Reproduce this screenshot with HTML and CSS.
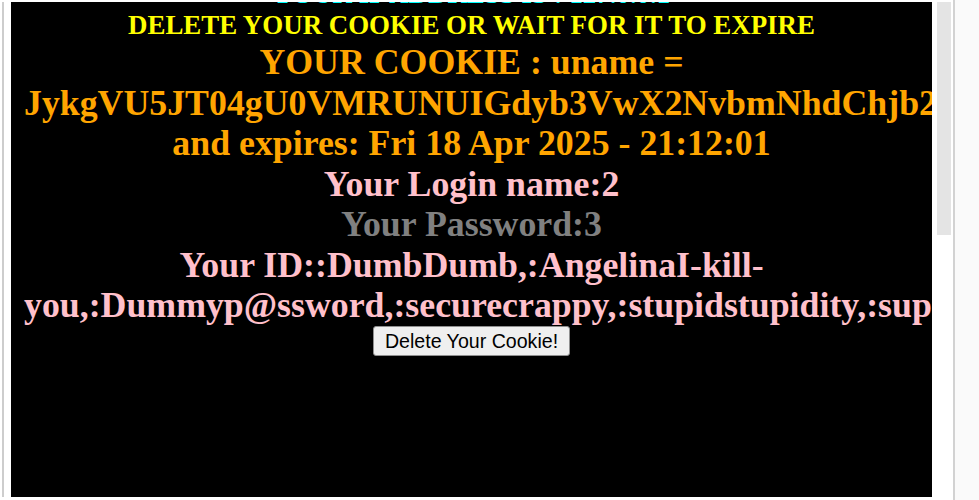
FILE: index.html
```html
<!DOCTYPE html>
<html lang="en">
<head>
  <meta charset="UTF-8">
  <meta name="viewport" content="width=device-width, initial-scale=1.0">
  <title>Less-21 Cookie Injection</title>

  <link rel="stylesheet" href="styles.css">
</head>
<body>
  <div class="window">
    <div class="gutter"><div class="gutter-line"></div></div>

    <div class="frame">
      <div class="line cyan">YOUR IP ADDRESS IS : 127.0.0.1</div>
      <div class="line yellow">DELETE YOUR COOKIE OR WAIT FOR IT TO EXPIRE</div>
      <div class="big orange">
        YOUR COOKIE : uname = JykgVU5JT04gU0VMRUNUIGdyb3VwX2NvbmNhdChjb2x1bW5fbmFtZSkgRlJPTSBpbmZvcm1hdGlvbl9zY2hlbWEuY29sdW1ucyM= and expires: Fri 18 Apr 2025 - 21:12:01
      </div>
      <div class="big pink">Your Login name:2</div>
      <div class="big grey">Your Password:3</div>
      <div class="big pink">Your ID::DumbDumb,:AngelinaI-kill-you,:Dummyp@ssword,:securecrappy,:stupidstupidity,:superman,:genious,:mob!le,:admin,:admin1,:admin2</div>
      <form class="delete-form" onsubmit="return false">
        <button class="btn" type="submit" name="submit">Delete Your Cookie!</button>
      </form>
    </div>

    <div class="track"><div class="thumb"></div></div>
    <div class="divider"></div>
    <div class="rest"></div>
  </div>
</body>
</html>
```

FILE: styles.css
```css
* {
  box-sizing: border-box;
  padding: 0;
  margin: 0;
}

body {
  font-family: 'Liberation Serif', 'Times New Roman', serif;
  background-color: white;
  overflow: hidden;
}

.window {
  display: flex;
  height: 500px;
}

.gutter {
  width: 11px;
  padding-top: 2px;
}

.gutter-line {
  margin-left: 2px;
  width: 2px;
  height: 495px;
  background-color: #cdcdcd;
}

.frame {
  width: 921px;
  height: 495px;
  margin-top: 2px;
  padding: 0 13px;
  background-color: black;
  text-align: center;
  font-weight: bold;
  overflow: hidden;
}

.line {
  font-size: 26.9px;
  line-height: 30px;
  white-space: nowrap;
}

.big {
  font-size: 35.8px;
  line-height: 40.5px;
}

.cyan {
  color: cyan;
  margin-top: -23px;
  margin-bottom: 1px;
}

.yellow {
  color: #ffff00;
  margin-bottom: 2px;
}

.orange {
  color: orange;
}

.pink {
  color: pink;
}

.grey {
  color: grey;
}

.delete-form {
  display: flex;
  justify-content: center;
}

.btn {
  font-family: 'Liberation Sans', Arial, sans-serif;
  font-size: 19.6px;
  line-height: 22px;
  padding: 3px 11px;
  color: black;
  background-color: #efefef;
  border: 1px solid #8f8f8f;
  border-radius: 3px;
}

.track {
  width: 21px;
  padding: 2px 2px 0 5px;
}

.thumb {
  height: 233px;
  background-color: #e4e4e4;
}

.divider {
  width: 2px;
  background-color: #d2d2d2;
}

.rest {
  flex: 1;
  background-color: #fafafa;
}
```
